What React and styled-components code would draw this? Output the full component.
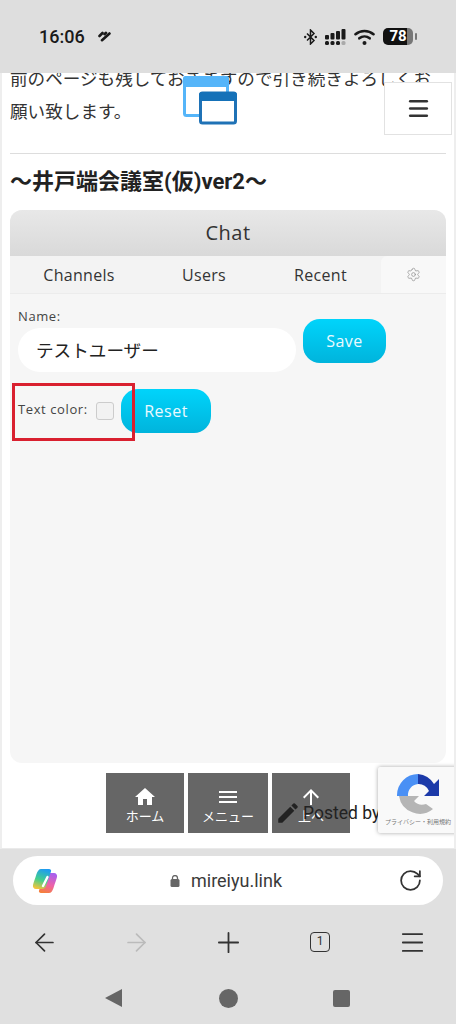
import React from "react";
import styled, { createGlobalStyle } from "styled-components";
import { ArrowLeft, ArrowRight, Plus, Menu, RotateCw, Settings } from "lucide-react";
import { MdHome, MdMenu, MdArrowUpward, MdEdit } from "react-icons/md";

const sans = `"Roboto", "Noto Sans CJK JP", sans-serif`;
const chatFont = `"Open Sans", "Noto Sans CJK JP", sans-serif`;

const GlobalStyle = createGlobalStyle`
  html, body { margin: 0; padding: 0; background: #e0e0e0; }
  * { box-sizing: border-box; }
`;

const Screen = styled.div`
  width: 456px;
  height: 1024px;
  display: flex;
  flex-direction: column;
  overflow: hidden;
  font-family: ${sans};
  background: #e0e0e0;
`;

const StatusBar = styled.div`
  height: 73px;
  flex: none;
  background: #dedede;
  display: flex;
  align-items: center;
  padding: 0 43px 0 39px;
  color: #1a1a1a;
`;

const Clock = styled.span`
  font-size: 18px;
  font-weight: 500;
  margin-right: 13px;
`;

const StatusRight = styled.div`
  margin-left: auto;
  display: flex;
  align-items: center;
  gap: 8px;
`;

const Battery = styled.div`
  width: 30px;
  height: 17px;
  border-radius: 5px;
  background: linear-gradient(90deg, #111 0 80%, #777 80%);
  color: #fff;
  font-size: 15px;
  font-weight: 700;
  line-height: 17px;
  text-align: center;
  position: relative;
  &::after {
    content: "";
    position: absolute;
    right: -4px;
    top: 5px;
    width: 2px;
    height: 7px;
    background: #777;
    border-radius: 1px;
  }
`;

const WebView = styled.div`
  height: 776px;
  flex: none;
  background: #fff;
  position: relative;
  overflow: hidden;
  border-left: 2px solid #eee;
  border-right: 2px solid #eee;
  border-bottom: 1px solid #eaeaea;
  padding: 0 8px;
`;

const Intro = styled.p`
  margin: -10px 0 0;
  font-size: 17.6px;
  line-height: 33px;
  color: #333;
`;

const Divider = styled.hr`
  border: 0;
  border-top: 1px solid #ddd;
  margin: 24px 0 0;
`;

const Title = styled.h2`
  margin: 12px 0 0;
  font-size: 22px;
  line-height: 32px;
  font-weight: 700;
  color: #222;
`;

const ChatPanel = styled.div`
  margin-top: 12px;
  height: 553px;
  background: #f6f6f6;
  border-radius: 12px;
  overflow: hidden;
  font-family: ${chatFont};
  color: #333;
`;

const ChatHeader = styled.div`
  height: 46px;
  background: linear-gradient(#e8e8e8, #d9d9d9);
  font-size: 20px;
  line-height: 46px;
  text-align: center;
  letter-spacing: 0.5px;
`;

const Tabs = styled.div`
  height: 38px;
  display: flex;
  border-bottom: 1px solid #ececec;
  background: #f3f3f3;
`;

const Tab = styled.div`
  width: ${(p) => p.$w}px;
  font-size: 16px;
  line-height: 39px;
  text-align: center;
  letter-spacing: 0.3px;
`;

const GearTab = styled.div`
  flex: 1;
  background: #f8f8f8;
  border-radius: 6px 0 0 0;
  color: #999;
  display: flex;
  align-items: center;
  justify-content: center;
`;

const Form = styled.div`
  padding: 12px 8px 0;
`;

const NameRow = styled.div`
  display: flex;
  gap: 7px;
`;

const NameField = styled.div`
  display: flex;
  flex-direction: column;
`;

const Label = styled.label`
  font-size: 13px;
  line-height: 20px;
  letter-spacing: 0.6px;
  color: #444;
`;

const NameInput = styled.div`
  width: 278px;
  height: 44px;
  margin-top: 2px;
  padding-left: 18px;
  border-radius: 22px;
  background: #fff;
  font-family: ${sans};
  font-size: 17.6px;
  line-height: 47px;
  color: #222;
`;

const CyanButton = styled.button`
  width: ${(p) => p.$w}px;
  height: 44px;
  padding: 0;
  border: 0;
  border-radius: 17px;
  background: linear-gradient(#00d4fb, #00b4dc);
  color: #eafaff;
  font-family: ${chatFont};
  font-size: 16px;
  letter-spacing: 0.5px;
`;

const SaveButton = styled(CyanButton)`
  margin-top: 13px;
`;

const ColorRow = styled.div`
  display: flex;
  align-items: center;
  margin-top: 17px;
`;

const ColorLabel = styled(Label)`
  width: 78px;
  margin-bottom: 5px;
  white-space: nowrap;
`;

const Swatch = styled.div`
  width: 18px;
  height: 18px;
  margin-right: 7px;
  border: 1px solid #ccc;
  border-radius: 3px;
  background: #f2f2f2;
`;

const RedBox = styled.div`
  position: absolute;
  left: 10px;
  top: 310px;
  width: 123px;
  height: 58px;
  border: 3px solid #d9202f;
`;

const LogoMark = styled.svg`
  position: absolute;
  left: 181px;
  top: 3px;
`;

const MenuButton = styled.div`
  position: absolute;
  left: 382px;
  top: 9px;
  width: 68px;
  height: 53px;
  background: #fff;
  border: 1px solid #e2e2e2;
  color: #333;
  display: flex;
  align-items: center;
  justify-content: center;
`;

const FloatNav = styled.div`
  position: absolute;
  left: 104px;
  top: 700px;
  display: flex;
  gap: 4px;
`;

const NavTile = styled.div`
  width: ${(p) => p.$w}px;
  height: 60px;
  background: #666;
  color: #fff;
  display: flex;
  flex-direction: column;
  align-items: center;
  padding-top: 12px;
  font-size: 13px;
  line-height: 16px;
`;

const PostedBy = styled.div`
  position: absolute;
  left: 273px;
  top: 727px;
  display: flex;
  align-items: center;
  gap: 2px;
  font-size: 17.5px;
  line-height: 26px;
  color: #222;
`;

const Recaptcha = styled.div`
  position: absolute;
  left: 376px;
  top: 694px;
  width: 80px;
  height: 66px;
  background: #f9f9f9;
  border-radius: 2px 0 0 2px;
  box-shadow: 0 0 4px rgba(0, 0, 0, 0.35);
  display: flex;
  flex-direction: column;
  align-items: center;
  gap: 2px;
  padding: 7px 0 0;
  font-size: 6px;
  line-height: 9px;
  color: #777;
`;

const AddressBar = styled.div`
  margin: 7px 13px 0;
  height: 49px;
  flex: none;
  background: #fff;
  border-radius: 25px;
  display: flex;
  align-items: center;
  padding: 0 20px 0 19px;
  color: #333;
`;

const Url = styled.div`
  flex: 1;
  display: flex;
  align-items: center;
  justify-content: center;
  gap: 11px;
  font-size: 18px;
  color: #3a3a3a;
  padding-right: 4px;
`;

const Toolbar = styled.div`
  height: 74px;
  flex: none;
  display: grid;
  grid-template-columns: repeat(5, 92px);
  margin-left: -2px;
  align-items: center;
  justify-items: center;
  color: #333;
`;

const TabCount = styled.div`
  width: 20px;
  height: 20px;
  border: 1.6px solid #333;
  border-radius: 4px;
  font-size: 12px;
  line-height: 17px;
  text-align: center;
`;

const SystemNav = styled.div`
  display: grid;
  grid-template-columns: repeat(3, 113px);
  justify-content: center;
  justify-items: center;
  align-items: center;
  height: 38px;
`;

const Triangle = styled.div`
  width: 0;
  height: 0;
  margin-right: 4px;
  border-style: solid;
  border-width: 9.5px 17px 9.5px 0;
  border-color: transparent #666 transparent transparent;
`;

const Circle = styled.div`
  width: 19px;
  height: 19px;
  border-radius: 50%;
  background: #666;
`;

const Square = styled.div`
  width: 17px;
  height: 17px;
  border-radius: 2px;
  background: #666;
`;

const Logo = () => (
  <LogoMark width="56" height="52" viewBox="0 0 56 52">
    <rect x="1.5" y="1.5" width="43" height="38" rx="2" fill="#fff" stroke="#55b5f9" strokeWidth="3" />
    <rect x="0" y="0" width="46" height="11" rx="3" fill="#55b5f9" />
    <rect x="17.500" y="17" width="35" height="30" rx="2" fill="#fff" stroke="#1f72b6" strokeWidth="3" />
    <rect x="16" y="16" width="38" height="9" rx="3" fill="#1571b8" />
  </LogoMark>
);

const BluetoothIcon = () => (
  <svg width="13" height="16" viewBox="0 0 13 16" fill="none" stroke="#1a1a1a" strokeWidth="1.5">
    <path d="M3 4.5l7 7-3.500 3.500V1L10 4.500l-7 7" />
    <circle cx="1.2" cy="8" r="1.200" fill="#1a1a1a" stroke="none" />
    <circle cx="11.800" cy="8" r="1.200" fill="#1a1a1a" stroke="none" />
  </svg>
);

const SignalIcon = () => (
  <svg width="21" height="16" viewBox="0 0 21 16" fill="#1a1a1a">
    <rect x="0" y="6" width="4" height="4.500" rx="1" />
    <rect x="0" y="12" width="4" height="4" rx="1.500" />
    <rect x="5.500" y="4" width="4" height="6.500" rx="1" />
    <rect x="5.500" y="12" width="4" height="4" rx="1.500" />
    <rect x="11" y="2" width="4" height="8.500" rx="1" />
    <rect x="11" y="12" width="4" height="4" rx="1.500" />
    <rect x="16.500" y="0" width="4" height="10.500" rx="1" />
    <rect x="16.500" y="12" width="4" height="4" rx="1.500" fill="#aaa" />
  </svg>
);

const WifiIcon = () => (
  <svg width="21" height="16" viewBox="0 0 21 16" fill="none" stroke="#1a1a1a" strokeWidth="2.600" strokeLinecap="round">
    <path d="M1.500 5.200C6.500 .9 14.500 .9 19.500 5.200" />
    <path d="M5.300 9.300c3-2.500 7.400-2.500 10.400 0" />
    <circle cx="10.500" cy="14" r="2" fill="#1a1a1a" stroke="none" />
  </svg>
);

const NfcIcon = () => (
  <svg width="13" height="11" viewBox="0 0 13 11" fill="none" stroke="#1a1a1a" strokeWidth="2.600" strokeLinecap="round">
    <path d="M1.500 5L4.500 2" />
    <path d="M4 9.200L11.500 2.500" />
    <path d="M6.500 3.200L8 1.800" />
  </svg>
);

const CopilotLogo = () => (
  <svg width="26" height="26" viewBox="0 0 26 26">
    <defs>
      <linearGradient id="cpLeft" x1="0.6" y1="0" x2="0.3" y2="1">
        <stop offset="0" stopColor="#1f9cf0" />
        <stop offset="0.55" stopColor="#43d08c" />
        <stop offset="1" stopColor="#f5c33b" />
      </linearGradient>
      <linearGradient id="cpRight" x1="0.4" y1="1" x2="0.7" y2="0">
        <stop offset="0" stopColor="#a860ee" />
        <stop offset="0.55" stopColor="#ee62a8" />
        <stop offset="1" stopColor="#f5803a" />
      </linearGradient>
    </defs>
    <path
      d="M9 1h8c1.500 0 2.500 1 2 2.500L14 18c-.7 2-2 3-4 3H4c-2.200 0-3.500-2-3-4 .7-3 2-6 3.500-11C5.500 3 7 1 9 1z"
      fill="url(#cpRight)"
      transform="rotate(180 13 13)"
    />
    <path
      d="M9 1h8c1.500 0 2.500 1 2 2.500L14 18c-.7 2-2 3-4 3H4c-2.200 0-3.500-2-3-4 .7-3 2-6 3.500-11C5.500 3 7 1 9 1z"
      fill="url(#cpLeft)"
    />
    <path d="M15.500 9l-4.500 9" stroke="#fff" strokeWidth="2.400" strokeLinecap="round" />
  </svg>
);

const LockIcon = () => (
  <svg width="10" height="12" viewBox="0 0 10 12" fill="#666">
    <rect x="0.500" y="4" width="9" height="8" rx="1.500" />
    <path d="M2.500 5V3a2.500 2.500 0 015 0v2" fill="none" stroke="#666" strokeWidth="1.300" />
  </svg>
);

const RecaptchaLogo = () => (
  <svg width="42" height="41" viewBox="0 0 42 41">
    <path d="M21 0A21 21 0 000 21v1h11a11 11 0 0110-12z" fill="#4a90f5" />
    <path d="M21 0v10a11 11 0 0111 7l-5 5h15V5l-5 5A21 21 0 0021 0z" fill="#1c3aa9" />
    <path d="M2 22h20l-5 5a11 11 0 0012 3l7 5A21 21 0 012 22z" fill="#b5b5b5" />
  </svg>
);

export default function App() {
  return (
    <>
      <GlobalStyle />
      <Screen>
        <StatusBar>
          <Clock>16:06</Clock>
          <NfcIcon />
          <StatusRight>
            <BluetoothIcon />
            <SignalIcon />
            <WifiIcon />
            <Battery>78</Battery>
          </StatusRight>
        </StatusBar>

        <WebView>
          <Intro>
            前のページも残しておきますので引き続きよろしくお願い致します。
          </Intro>
          <Divider />
          <Title>〜井戸端会議室(仮)ver2〜</Title>

          <ChatPanel>
            <ChatHeader>Chat</ChatHeader>
            <Tabs>
              <Tab $w={138}>Channels</Tab>
              <Tab $w={112}>Users</Tab>
              <Tab $w={121}>Recent</Tab>
              <GearTab>
                <Settings size={15} strokeWidth={1.300} />
              </GearTab>
            </Tabs>
            <Form>
              <NameRow>
                <NameField>
                  <Label>Name:</Label>
                  <NameInput>テストユーザー</NameInput>
                </NameField>
                <SaveButton $w={83}>Save</SaveButton>
              </NameRow>
              <ColorRow>
                <ColorLabel>Text color:</ColorLabel>
                <Swatch />
                <CyanButton $w={90}>Reset</CyanButton>
              </ColorRow>
            </Form>
          </ChatPanel>

          <RedBox />
          <Logo />
          <MenuButton>
            <Menu size={25} strokeWidth={2.400} />
          </MenuButton>

          <FloatNav>
            <NavTile $w={78}>
              <MdHome size={24} />
              ホーム
            </NavTile>
            <NavTile $w={80}>
              <MdMenu size={24} />
              メニュー
            </NavTile>
            <NavTile $w={78}>
              <MdArrowUpward size={24} />
              上へ
            </NavTile>
          </FloatNav>
          <PostedBy>
            <MdEdit size={26} />
            Posted by
          </PostedBy>
          <Recaptcha>
            <RecaptchaLogo />
            <span>プライバシー・利用規約</span>
          </Recaptcha>
        </WebView>

        <AddressBar>
          <CopilotLogo />
          <Url>
            <LockIcon />
            mireiyu.link
          </Url>
          <RotateCw size={25} strokeWidth={1.700} />
        </AddressBar>

        <Toolbar>
          <ArrowLeft size={29} strokeWidth={1.400} />
          <ArrowRight size={29} strokeWidth={1.400} color="#bbb" />
          <Plus size={33} strokeWidth={1.300} />
          <TabCount>1</TabCount>
          <Menu size={29} strokeWidth={1.500} />
        </Toolbar>

        <SystemNav>
          <Triangle />
          <Circle />
          <Square />
        </SystemNav>
      </Screen>
    </>
  );
}
